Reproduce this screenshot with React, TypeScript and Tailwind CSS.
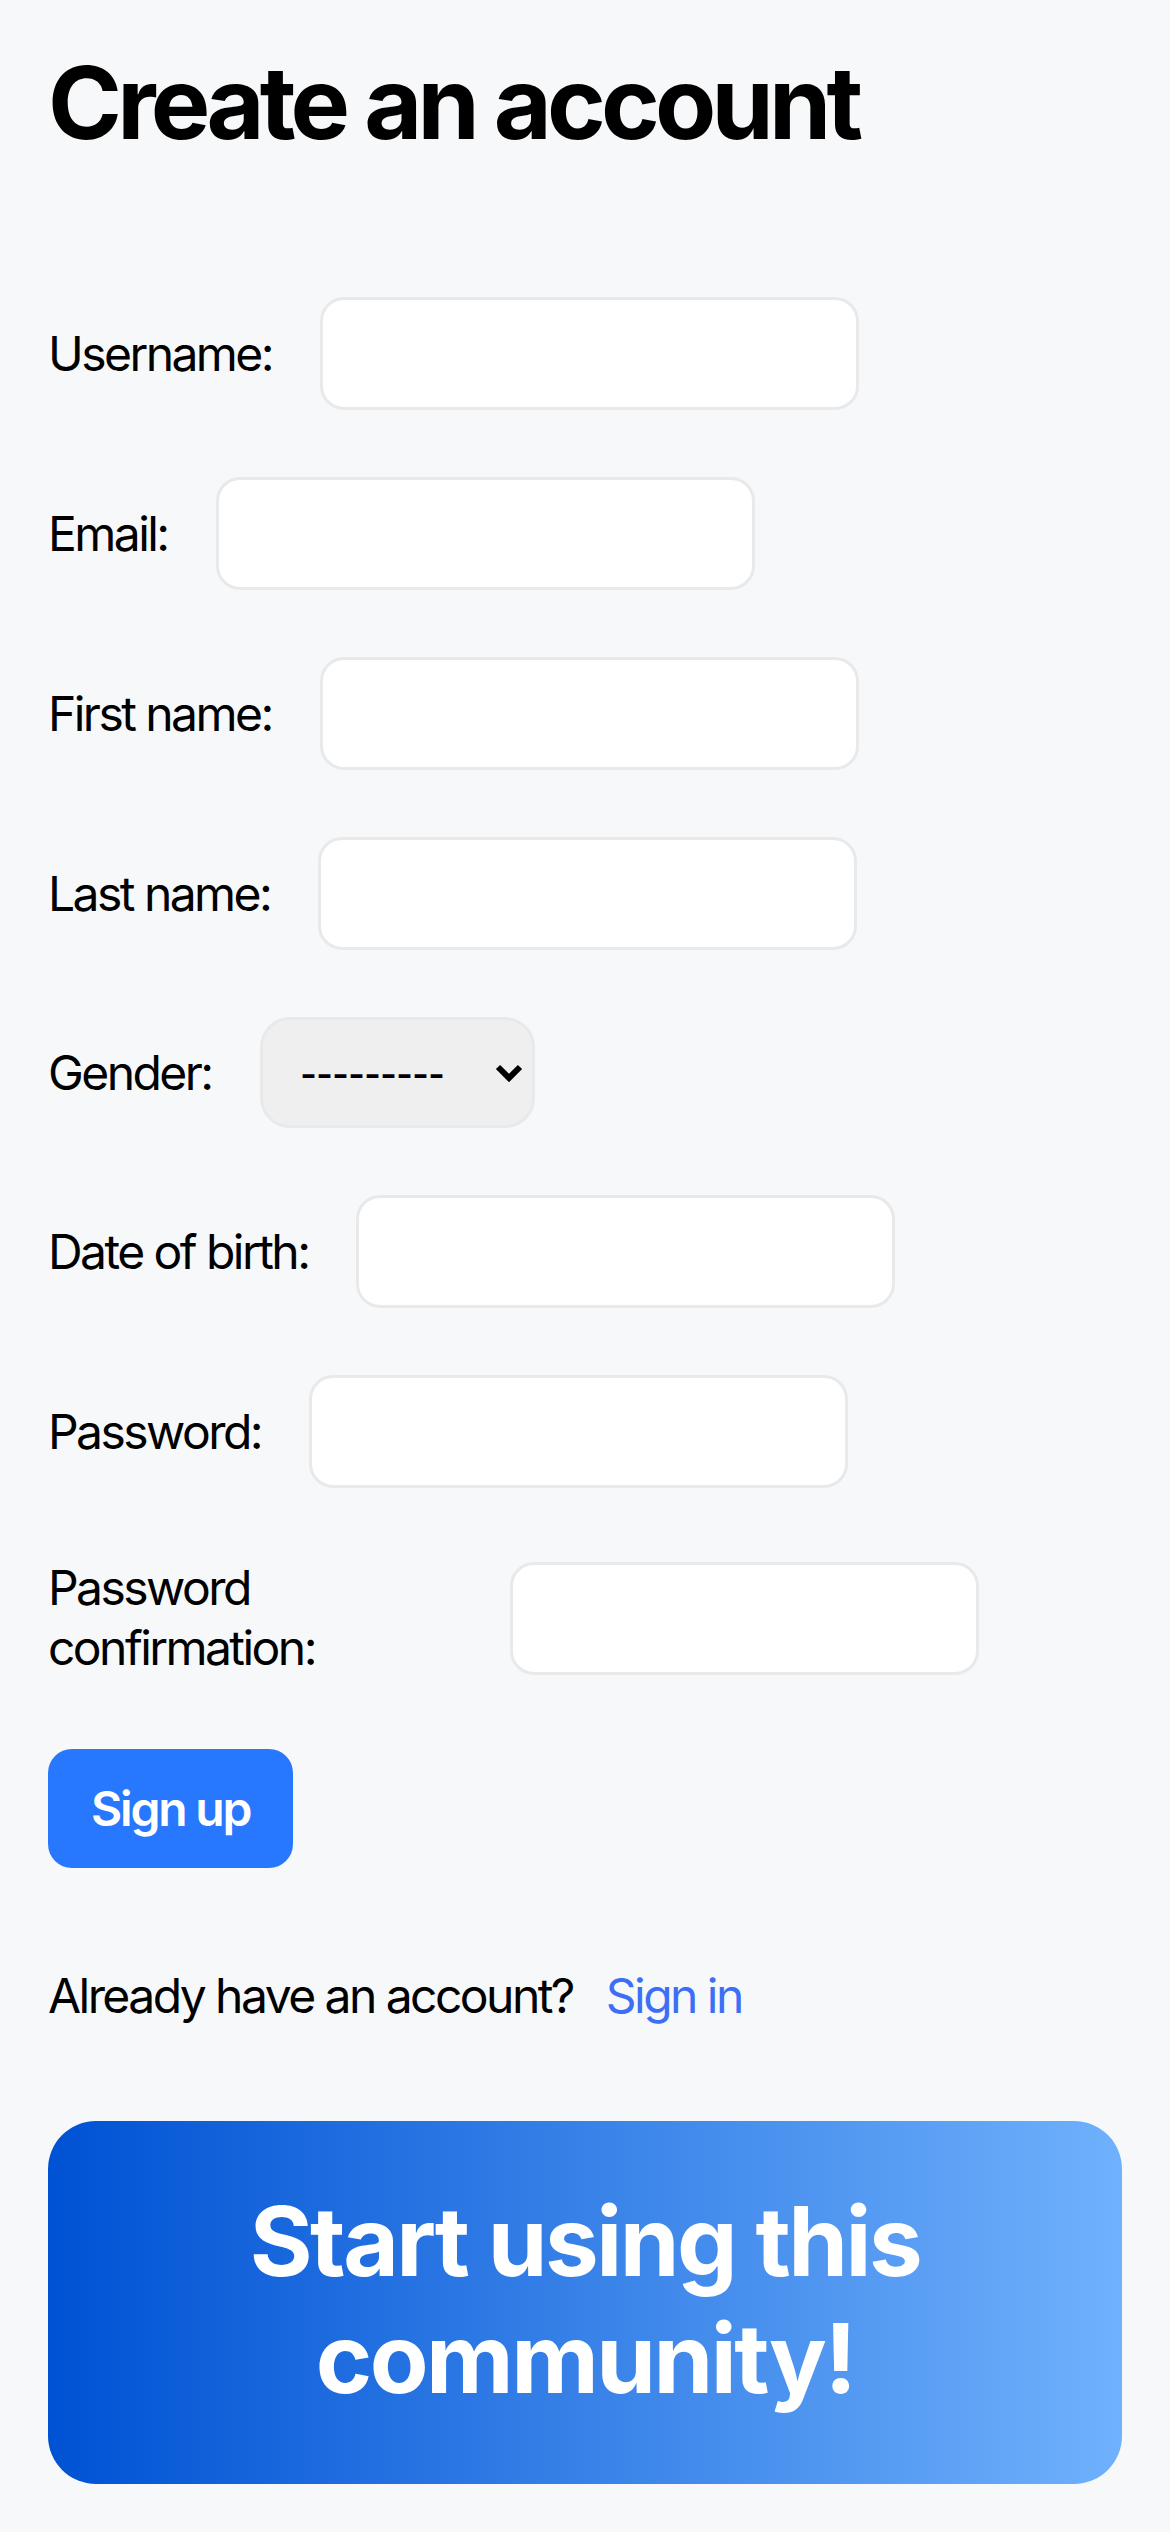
export default function App() {
  const inputRows = ["Username:", "Email:", "First name:", "Last name:"]
  const lowerRows = ["Date of birth:", "Password:"]

  return (
    <div className="min-h-screen bg-[#f7f8fa] px-[48px] pt-[43px] pb-[48px] font-[family-name:Inter,sans-serif] text-black">
      <h1 className="text-[100px] font-bold leading-[120px] tracking-[-4.8px]">Create an account</h1>

      <form className="mt-[134px] flex flex-col gap-[67px]">
        {inputRows.map((label) => (
          <div key={label} className="flex items-center gap-[48px]">
            <label className="text-[48px] leading-[60px] tracking-[-2.55px]">{label}</label>
            <input className="h-[113px] w-[539px] rounded-[24px] border-[3px] border-[#e8e9eb] bg-white" />
          </div>
        ))}

        <div className="flex items-center gap-[48px]">
          <label className="text-[48px] leading-[60px] tracking-[-2.55px]">Gender:</label>
          <div className="flex h-[111px] w-[275px] items-center justify-between rounded-[30px] border-[3px] border-[#e8e9eb] bg-[#efefef] pl-[38px] pr-[9px]">
            <span className="whitespace-nowrap font-[family-name:'Liberation_Sans',Arial,sans-serif] text-[48px] leading-[60px]">
              ---------
            </span>
            <svg width="28" height="18" viewBox="0 0 28 18" fill="none">
              <path d="M3 3 L14 14 L25 3" stroke="#000" strokeWidth="6" />
            </svg>
          </div>
        </div>

        {lowerRows.map((label) => (
          <div key={label} className="flex items-center gap-[48px]">
            <label className="text-[48px] leading-[60px] tracking-[-2.55px]">{label}</label>
            <input className="h-[113px] w-[539px] rounded-[24px] border-[3px] border-[#e8e9eb] bg-white" />
          </div>
        ))}

        <div className="mt-[3px] flex items-center gap-[48px]">
          <label className="w-[414px] text-[48px] leading-[60px] tracking-[-2.55px]">
            Password
            <br />
            confirmation:
          </label>
          <input className="h-[113px] w-[469px] rounded-[24px] border-[3px] border-[#e8e9eb] bg-white" />
        </div>

        <div className="mt-[4px]">
          <button
            type="button"
            className="flex h-[119px] items-center rounded-[24px] bg-[#2777ff] px-[43px] text-[48px] font-semibold leading-[72px] tracking-[-2.2px] text-white"
          >
            Sign up
          </button>
        </div>
      </form>

      <p className="mt-[92px] text-[48px] leading-[72px] tracking-[-2.55px]">
        Already have an account?
        <a href="#" className="ml-[33px] text-[#3d6ff6]">
          Sign in
        </a>
      </p>

      <div className="mt-[89px] rounded-[48px] bg-[linear-gradient(to_right,#0052d4,#6fb1fc)] px-[48px] pt-[62px] pb-[67px] text-center text-[96px] font-bold leading-[117px] tracking-[-2.5px] text-white">
        Start using this community!
      </div>
    </div>
  )
}
